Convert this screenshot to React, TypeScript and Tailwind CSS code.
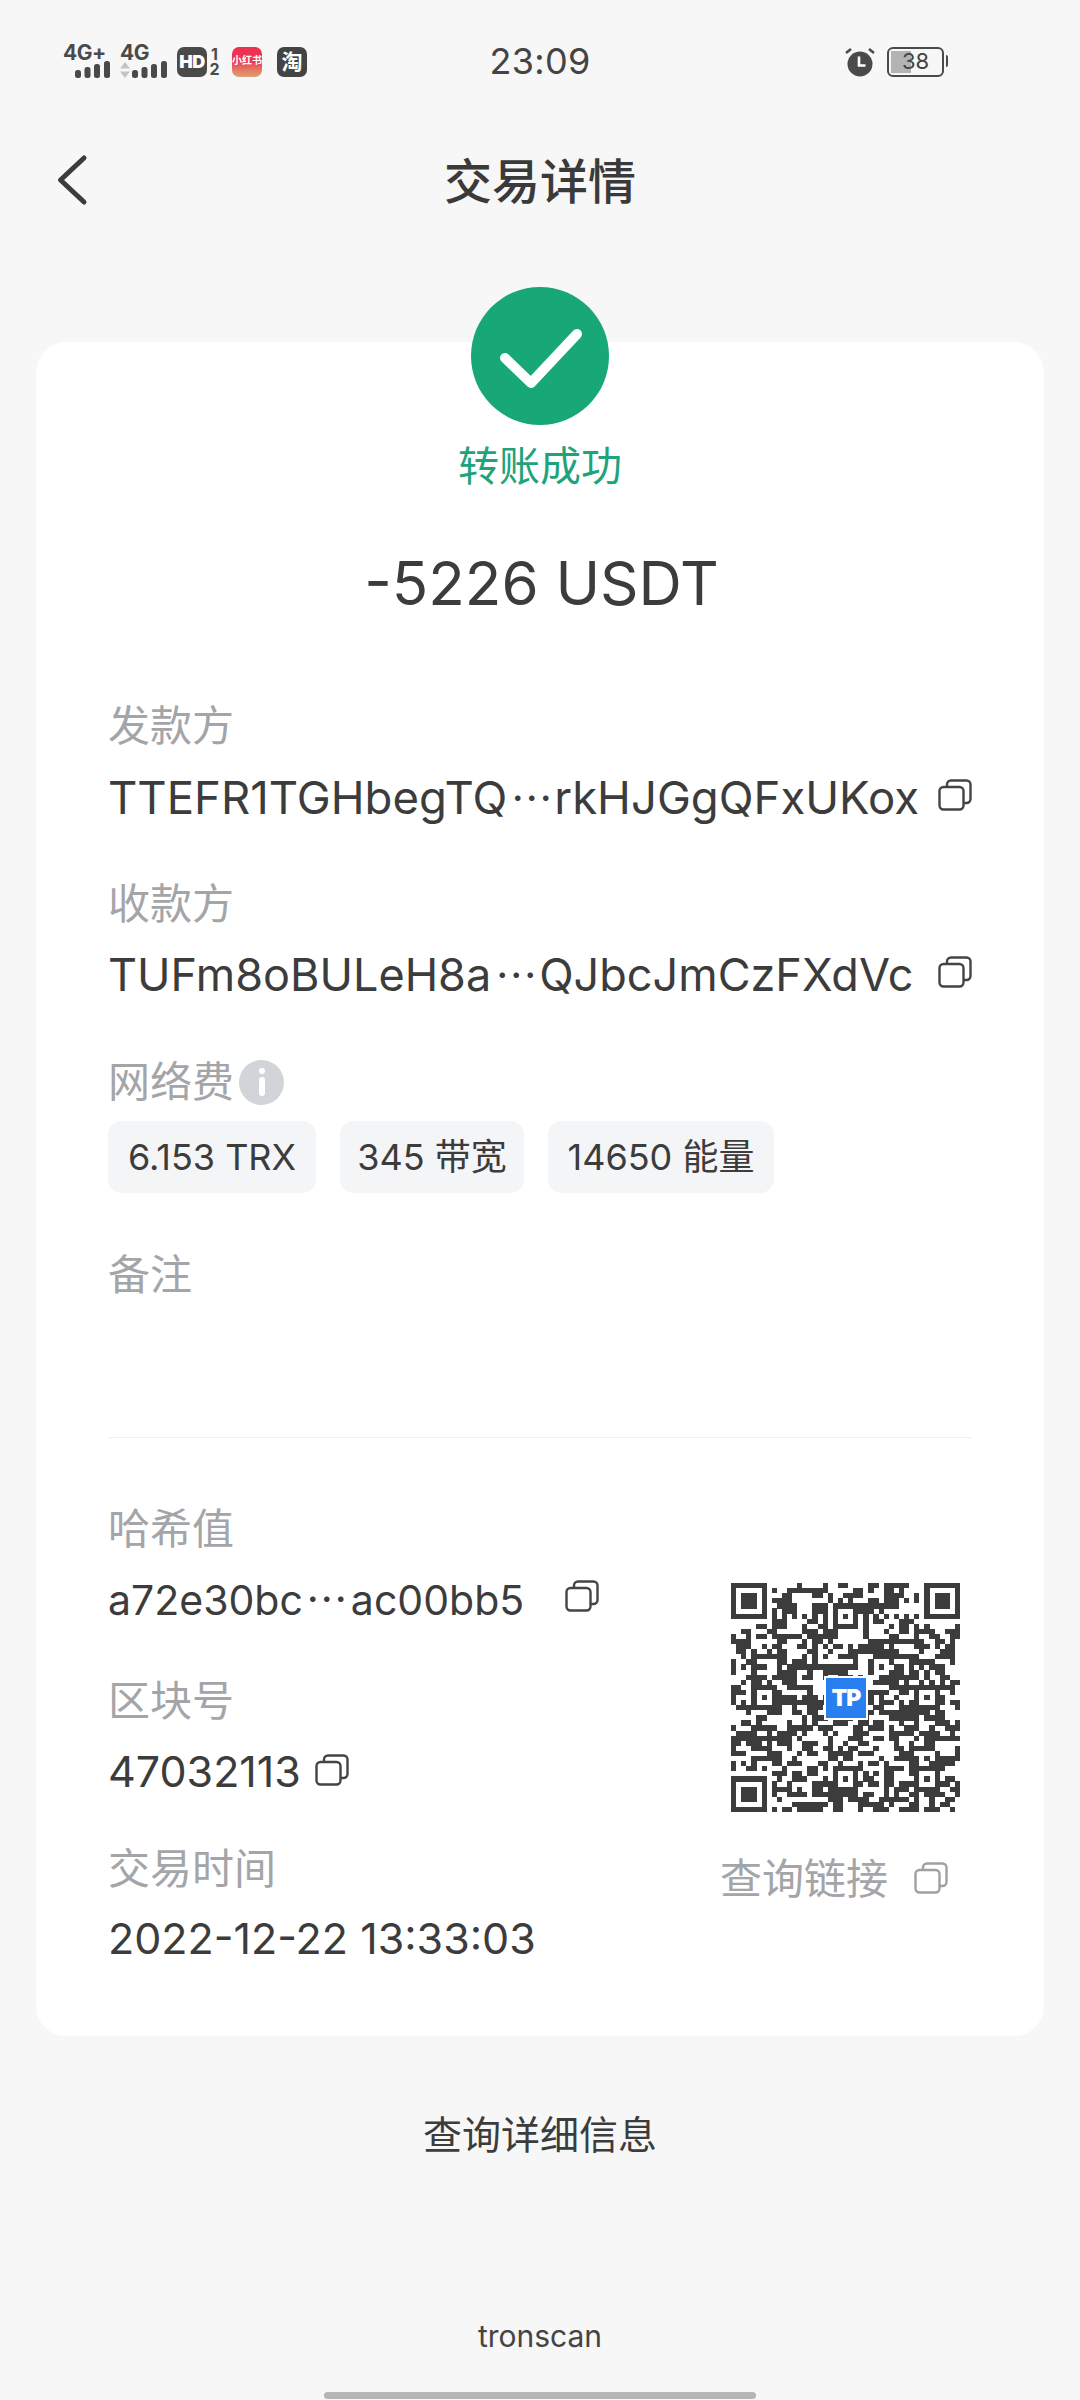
import React, { useMemo } from "react";

const FONT = "font-['Inter','Noto_Sans_CJK_SC',sans-serif]";

function CopyIcon({ className = "" }: { className?: string }) {
  return (
    <svg viewBox="0 0 34 32" width="34" height="32" fill="none" stroke="#444" strokeWidth="2.4" className={className}>
      <rect x="1.5" y="8" width="24" height="22.5" rx="4" />
      <path d="M9 8V5.5a4 4 0 0 1 4-4h15.5a4 4 0 0 1 4 4V20a4 4 0 0 1-4 4h-3" />
    </svg>
  );
}

function Dots({ className = "" }: { className?: string }) {
  return <span className={`font-['Noto_Sans_CJK_SC',sans-serif] inline-block text-center ${className}`}>⋯</span>;
}

function Bars() {
  return (
    <svg width="35" height="17" viewBox="0 0 35 17" fill="#4a4a4a">
      <rect x="0" y="9" width="6" height="8" rx="2.5" />
      <rect x="9.5" y="6" width="6" height="11" rx="2.5" />
      <rect x="19" y="3" width="6" height="14" rx="2.5" />
      <rect x="29" y="0" width="6" height="17" rx="2.5" />
    </svg>
  );
}

function QR() {
  const cells = useMemo(() => {
    const n = 45;
    const g: boolean[][] = [];
    let s = 20221222;
    const rnd = () => {
      s = (s * 1664525 + 1013904223) >>> 0;
      return ((s >>> 8) & 0xffff) / 0xffff;
    };
    for (let y = 0; y < n; y++) {
      g.push([]);
      for (let x = 0; x < n; x++) {
        const left = x > 0 ? g[y][x - 1] : false;
        const up = y > 0 ? g[y - 1][x] : false;
        const p = 0.42 + (left ? 0.12 : 0) + (up ? 0.06 : 0);
        g[y][x] = rnd() < p;
      }
    }
    const block = (ox: number, oy: number, size: number) => {
      for (let y = oy; y < oy + size; y++)
        for (let x = ox; x < ox + size; x++)
          if (y >= 0 && y < n && x >= 0 && x < n) g[y][x] = false;
    };
    const finder = (ox: number, oy: number) => {
      block(ox - 1, oy - 1, 9);
      for (let y = 0; y < 7; y++)
        for (let x = 0; x < 7; x++) {
          const edge = x === 0 || y === 0 || x === 6 || y === 6;
          const mid = x >= 2 && x <= 4 && y >= 2 && y <= 4;
          g[oy + y][ox + x] = edge || mid;
        }
    };
    finder(0, 0);
    finder(38, 0);
    finder(0, 38);
    const align = (ox: number, oy: number) => {
      for (let y = 0; y < 5; y++)
        for (let x = 0; x < 5; x++) {
          const edge = x === 0 || y === 0 || x === 4 || y === 4;
          g[oy + y][ox + x] = edge || (x === 2 && y === 2);
        }
    };
    [[20, 4], [4, 20], [36, 20], [20, 36], [36, 36]].forEach(([x, y]) => align(x, y));
    for (let i = 8; i < 37; i++) {
      g[6][i] = i % 2 === 0;
      g[i][6] = i % 2 === 0;
    }
    const out: [number, number][] = [];
    g.forEach((row, y) => row.forEach((v, x) => v && out.push([x, y])));
    return out;
  }, []);
  return (
    <svg viewBox="0 0 45 45" width="229" height="229" shapeRendering="crispEdges" className="block">
      {cells.map(([x, y]) => (
        <rect key={`${x}-${y}`} x={x} y={y} width="1.02" height="1.02" fill="#3c3c3c" />
      ))}
    </svg>
  );
}

function Label({ children, className = "" }: { children: React.ReactNode; className?: string }) {
  return <div className={`h-[56px] leading-[56px] text-[42px] text-[#a3a5a8] ${className}`}>{children}</div>;
}

function Value({ children, className = "" }: { children: React.ReactNode; className?: string }) {
  return <div className={`h-[60px] flex items-center text-[#3c3c3c] whitespace-nowrap ${className}`}>{children}</div>;
}

function Chip({ children, w }: { children: React.ReactNode; w: string }) {
  return (
    <div className={`${w} h-[72px] rounded-[14px] bg-[#f4f5f7] flex items-center justify-center text-[36px] text-[#3c3c3c] whitespace-nowrap`}>
      {children}
    </div>
  );
}

export default function App() {
  return (
    <div className={`${FONT} w-[1080px] h-[2400px] bg-[#f7f7f7] overflow-hidden flex flex-col items-center`}>
      {/* status bar */}
      <div className="w-full h-[122px] grid grid-cols-[1fr_auto_1fr] items-center text-[#4a4a4a]">
        <div className="flex items-end h-[30px] pl-[63px] mt-[2px]">
          <div className="w-[47px] h-[32px] flex flex-col mr-[10px]">
            <span className="text-[21px] leading-[16px] font-bold tracking-[-0.5px]">4G+</span>
            <div className="self-end"><Bars /></div>
          </div>
          <div className="w-[47px] h-[32px] flex flex-col mr-[10px]">
            <span className="text-[21px] leading-[16px] font-bold tracking-[-0.5px]">4G</span>
            <div className="flex items-end justify-between">
              <svg width="10" height="16" viewBox="0 0 10 16" fill="#c4c4c4">
                <path d="M5 0l5 6.5H0zM5 16l5-6.5H0z" />
              </svg>
              <Bars />
            </div>
          </div>
          <div className="w-[30px] h-[30px] rounded-[7px] bg-[#4a4a4a] text-white text-[18px] leading-[30px] font-black text-center tracking-[-0.5px]">HD</div>
          <div className="w-[13px] ml-[1px] h-[30px] text-center whitespace-pre-line text-[16px] leading-[15px] font-bold">{"1\n2"}</div>
          <div className="ml-[11px] w-[30px] h-[30px] rounded-[7px] bg-gradient-to-b from-[#ee2f50] via-[#ea3a54] to-[#d9a271] text-white text-[10px] leading-[26px] font-bold text-center whitespace-nowrap overflow-hidden">小红书</div>
          <div className="ml-[15px] w-[30px] h-[30px] rounded-[7px] bg-[#444] text-white text-[21px] leading-[30px] font-bold text-center">淘</div>
        </div>
        <div className="text-[36px] leading-[44px] text-[#444] tracking-[0.3px]">23:09</div>
        <div className="flex items-center justify-end h-[30px] pr-[136px] mt-[2px]">
          <svg width="30" height="30" viewBox="0 0 30 30" className="mr-[12px]">
            <circle cx="15" cy="17" r="12.5" fill="#4a4a4a" />
            <path d="M14 9.5v9h6.5" fill="none" stroke="#fff" strokeWidth="2.6" />
            <path d="M1 6l5-4M29 6l-5-4" stroke="#4a4a4a" strokeWidth="2.5" />
          </svg>
          <div className="relative w-[57px] h-[30px] rounded-[6px] border-[2.5px] border-[#4a4a4a] p-[2px]">
            <div className="w-[20px] h-full bg-[#b3b3b3]" />
            <span className="absolute inset-0 text-center text-[22px] leading-[25px] text-[#444]">38</span>
            <span className="absolute right-[-6px] top-[6px] w-[2.5px] h-[12px] bg-[#4a4a4a] rounded-r-[2px]" />
          </div>
        </div>
      </div>

      {/* header */}
      <div className="w-full h-[120px] relative flex items-center justify-center">
        <svg width="32" height="52" viewBox="0 0 32 52" fill="none" className="absolute left-[56px] top-[32px]">
          <path d="M28 4L4.5 26 28 48" stroke="#3c3c3c" strokeWidth="5" strokeLinecap="round" strokeLinejoin="round" />
        </svg>
        <h1 className="text-[48px] leading-[60px] font-medium text-[#3a3a3a]">交易详情</h1>
      </div>

      {/* card */}
      <div className="mt-[100px] w-[1008px] bg-white rounded-[30px] px-[72px] pb-[68px] flex flex-col">
        <div className="flex flex-col items-center">
          <div className="-mt-[55px] w-[138px] h-[138px] rounded-full bg-[#18a777] flex items-center justify-center">
            <svg width="138" height="138" viewBox="0 0 138 138" fill="none">
              <path d="M34 71L60 96 106 47" stroke="#fff" strokeWidth="10" strokeLinecap="round" strokeLinejoin="round" />
            </svg>
          </div>
          <div className="mt-[13px] h-[56px] leading-[56px] text-[41px] text-[#1fa37a]">转账成功</div>
          <div className="mt-[49px] ml-[3px] h-[80px] leading-[80px] text-[60px] text-[#3c3c3c]">-5226 USDT</div>
        </div>

        <Label className="mt-[75px]">发款方</Label>
        <Value className="mt-[14px] justify-between text-[45.5px]">
          <span>TTEFR1TGHbegTQ<Dots className="text-[42px] w-[47px] tracking-[-2px]" />rkHJGgQFxUKox</span>
          <CopyIcon className="-mt-[6px]" />
        </Value>
        <Label className="mt-[48px]">收款方</Label>
        <Value className="mt-[13px] justify-between text-[45px]">
          <span>TUFm8oBULeH8a<Dots className="text-[42px] w-[48px] tracking-[-2px]" />QJbcJmCzFXdVc</span>
          <CopyIcon className="-mt-[6px]" />
        </Value>
        <div className="mt-[49px] flex items-center">
          <Label>网络费</Label>
          <div className="ml-[5px] w-[45px] h-[45px] rounded-full bg-[#d1d4d8] flex flex-col items-center justify-center">
            <span className="w-[6px] h-[6px] rounded-full bg-white" />
            <span className="mt-[3px] w-[6px] h-[19px] rounded-[3px] bg-white" />
          </div>
        </div>
        <div className="mt-[11px] flex gap-[24px]">
          <Chip w="w-[208px]">6.153 TRX</Chip>
          <Chip w="w-[184px]">345 带宽</Chip>
          <Chip w="w-[226px]">14650 能量</Chip>
        </div>
        <Label className="mt-[54px]">备注</Label>
        <div className="mt-[134px] h-px bg-[#eeeeee]" />

        <div className="pt-[63px] flex justify-between">
          <div className="flex flex-col">
            <Label>哈希值</Label>
            <Value className="mt-[11px] text-[41px]">
              <span>a72e30bc<Dots className="text-[42px] w-[48px]" />ac00bb5</span>
              <CopyIcon className="ml-[41px] -mt-[4px]" />
            </Value>
            <Label className="mt-[45px]">区块号</Label>
            <Value className="mt-[12px] text-[43px]">
              <span>47032113</span>
              <CopyIcon className="ml-[14px] -mt-[2px]" />
            </Value>
            <Label className="mt-[40px]">交易时间</Label>
            <Value className="mt-[11px] text-[43px]">2022-12-22 13:33:03</Value>
          </div>
          <div className="w-[252px] flex flex-col">
            <div className="relative mt-[82px] ml-[11px] w-[229px] h-[229px]">
              <QR />
              <div className="absolute left-[93px] top-[93px] w-[44px] h-[44px] border-[2px] border-white bg-[#2a7ff0] flex items-center justify-center text-white text-[23px] leading-none font-black tracking-[-1px]">
                TP
              </div>
            </div>
            <div className="mt-[39px] flex items-center">
              <Label className="text-[#a3a5a8]">查询链接</Label>
              <CopyIcon className="ml-[26px] -mt-[3px] opacity-50" />
            </div>
          </div>
        </div>
      </div>

      <div className="mt-[69px] h-[60px] leading-[60px] text-[39px] text-[#3c3c3c]">查询详细信息</div>
      <div className="mt-[151px] h-[40px] leading-[40px] text-[30px] text-[#444]">tronscan</div>
      <div className="mt-[36px] w-[432px] h-[7px] rounded-full bg-[#b5b5b5]" />
    </div>
  );
}
